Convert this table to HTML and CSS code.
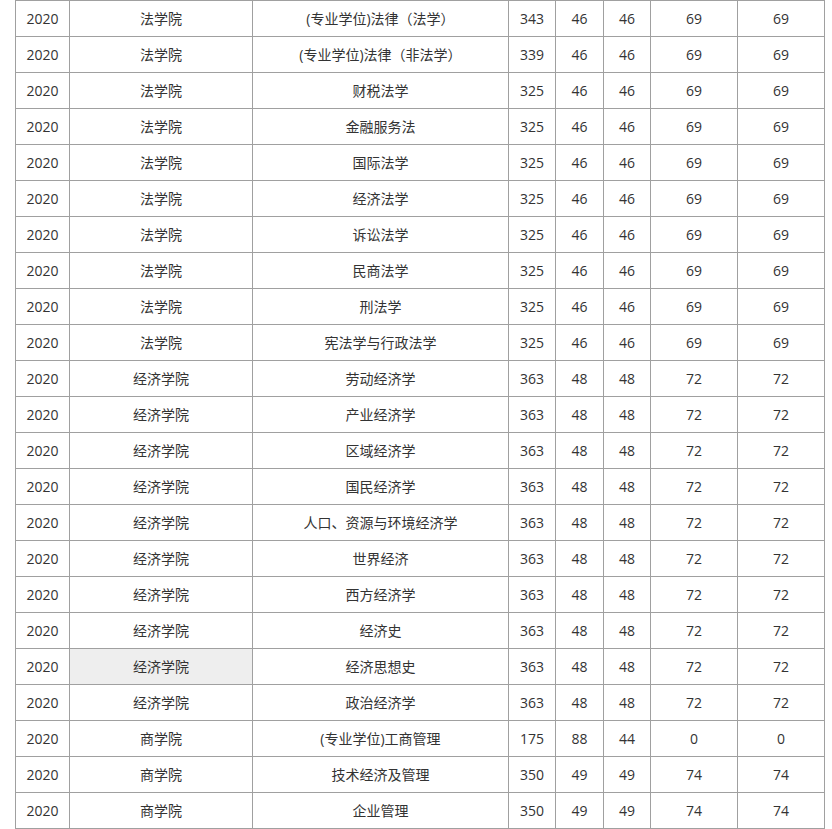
FILE: index.html
```html
<!DOCTYPE html>
<html lang="zh">
<head>
<meta charset="utf-8">
<link rel="stylesheet" href="styles.css">
</head>
<body>
<table class="score-table">
<colgroup>
<col class="c-year"><col class="c-school"><col class="c-major"><col class="c-total"><col class="c-s1"><col class="c-s2"><col class="c-s3"><col class="c-s4">
</colgroup>
<tbody>
<tr><td>2020</td><td>法学院</td><td>(专业学位)法律（法学）</td><td>343</td><td>46</td><td>46</td><td>69</td><td>69</td></tr>
<tr><td>2020</td><td>法学院</td><td>(专业学位)法律（非法学）</td><td>339</td><td>46</td><td>46</td><td>69</td><td>69</td></tr>
<tr><td>2020</td><td>法学院</td><td>财税法学</td><td>325</td><td>46</td><td>46</td><td>69</td><td>69</td></tr>
<tr><td>2020</td><td>法学院</td><td>金融服务法</td><td>325</td><td>46</td><td>46</td><td>69</td><td>69</td></tr>
<tr><td>2020</td><td>法学院</td><td>国际法学</td><td>325</td><td>46</td><td>46</td><td>69</td><td>69</td></tr>
<tr><td>2020</td><td>法学院</td><td>经济法学</td><td>325</td><td>46</td><td>46</td><td>69</td><td>69</td></tr>
<tr><td>2020</td><td>法学院</td><td>诉讼法学</td><td>325</td><td>46</td><td>46</td><td>69</td><td>69</td></tr>
<tr><td>2020</td><td>法学院</td><td>民商法学</td><td>325</td><td>46</td><td>46</td><td>69</td><td>69</td></tr>
<tr><td>2020</td><td>法学院</td><td>刑法学</td><td>325</td><td>46</td><td>46</td><td>69</td><td>69</td></tr>
<tr><td>2020</td><td>法学院</td><td>宪法学与行政法学</td><td>325</td><td>46</td><td>46</td><td>69</td><td>69</td></tr>
<tr><td>2020</td><td>经济学院</td><td>劳动经济学</td><td>363</td><td>48</td><td>48</td><td>72</td><td>72</td></tr>
<tr><td>2020</td><td>经济学院</td><td>产业经济学</td><td>363</td><td>48</td><td>48</td><td>72</td><td>72</td></tr>
<tr><td>2020</td><td>经济学院</td><td>区域经济学</td><td>363</td><td>48</td><td>48</td><td>72</td><td>72</td></tr>
<tr><td>2020</td><td>经济学院</td><td>国民经济学</td><td>363</td><td>48</td><td>48</td><td>72</td><td>72</td></tr>
<tr><td>2020</td><td>经济学院</td><td>人口、资源与环境经济学</td><td>363</td><td>48</td><td>48</td><td>72</td><td>72</td></tr>
<tr><td>2020</td><td>经济学院</td><td>世界经济</td><td>363</td><td>48</td><td>48</td><td>72</td><td>72</td></tr>
<tr><td>2020</td><td>经济学院</td><td>西方经济学</td><td>363</td><td>48</td><td>48</td><td>72</td><td>72</td></tr>
<tr><td>2020</td><td>经济学院</td><td>经济史</td><td>363</td><td>48</td><td>48</td><td>72</td><td>72</td></tr>
<tr><td>2020</td><td class="hl">经济学院</td><td>经济思想史</td><td>363</td><td>48</td><td>48</td><td>72</td><td>72</td></tr>
<tr><td>2020</td><td>经济学院</td><td>政治经济学</td><td>363</td><td>48</td><td>48</td><td>72</td><td>72</td></tr>
<tr><td>2020</td><td>商学院</td><td>(专业学位)工商管理</td><td>175</td><td>88</td><td>44</td><td>0</td><td>0</td></tr>
<tr><td>2020</td><td>商学院</td><td>技术经济及管理</td><td>350</td><td>49</td><td>49</td><td>74</td><td>74</td></tr>
<tr><td>2020</td><td>商学院</td><td>企业管理</td><td>350</td><td>49</td><td>49</td><td>74</td><td>74</td></tr>
</tbody>
</table>
</body>
</html>
```
FILE: styles.css
```css
html, body {
  margin: 0;
  padding: 0;
  background: #fff;
}
body {
  font-family: "Open Sans", "Noto Sans CJK SC", sans-serif;
  font-size: 14px;
  color: #333;
}
.score-table {
  margin-left: 15px;
  border-collapse: collapse;
  table-layout: fixed;
  width: 809px;
}
.c-year { width: 54px; }
.c-school { width: 183px; }
.c-major { width: 256px; }
.c-total { width: 47px; }
.c-s1 { width: 48px; }
.c-s2 { width: 47px; }
.c-s3 { width: 87px; }
.c-s4 { width: 87px; }
.score-table td {
  border: 1px solid #a0a0a0;
  height: 36px;
  padding: 0;
  text-align: center;
  vertical-align: middle;
  line-height: 20px;
  box-sizing: border-box;
  white-space: nowrap;
  font-weight: 400;
}
.score-table td.hl {
  background: #eeeeee;
}
```
